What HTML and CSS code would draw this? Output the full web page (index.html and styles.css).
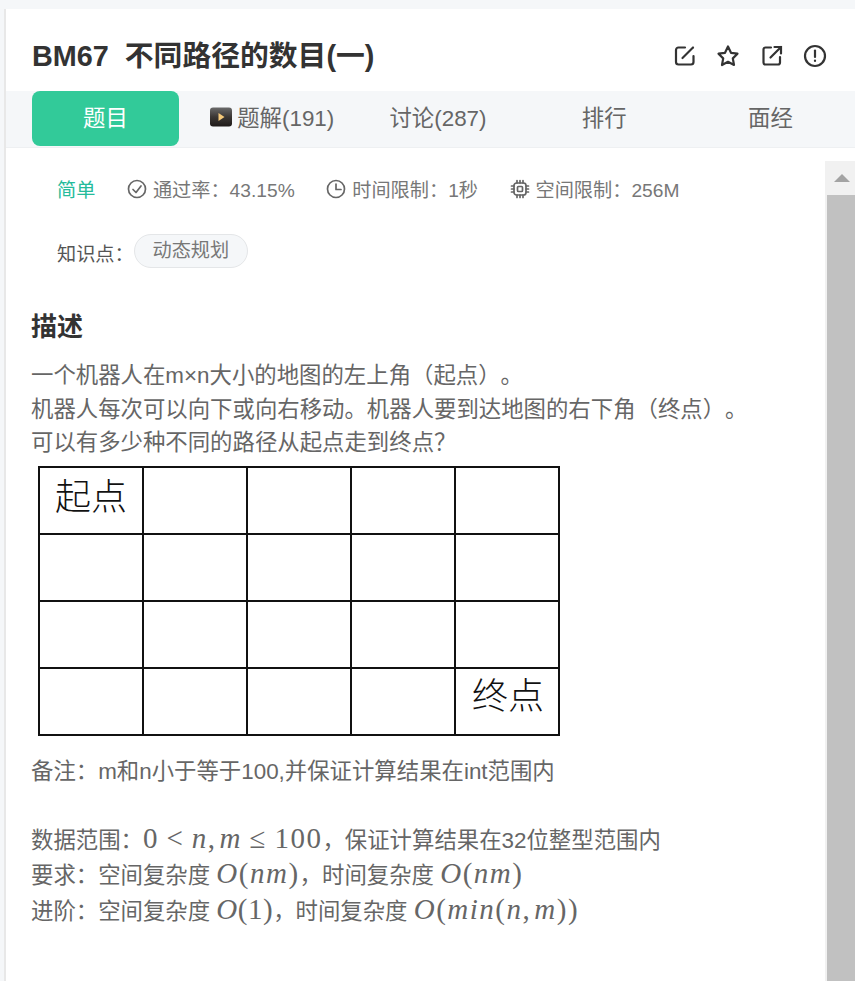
FILE: index.html
```html
<!DOCTYPE html>
<html>
<head>
  <meta charset="utf-8">
  <link rel="stylesheet" href="styles.css">
</head>
<body>
  <div class="panel">
    <div class="title-row">
      <h1 class="title">BM67&nbsp; 不同路径的数目(一)</h1>
      <div class="actions">
        <svg class="action-icon" viewBox="0 0 24 24"><path d="M12 3.500H5.500A2.500 2.500 0 0 0 3 6V18A2.500 2.500 0 0 0 5.500 20.500H18A2.500 2.500 0 0 0 20.500 18V12"/><path d="M9.500 14L20 3.500"/></svg>
        <svg class="action-icon" viewBox="0 0 24 24"><path d="M12 2.500L15 8.800L21.500 9.700L16.800 14.400L18 21L12 17.800L6 21L7.200 14.400L2.500 9.700L9 8.800Z" stroke-linejoin="round"/></svg>
        <svg class="action-icon" viewBox="0 0 24 24"><path d="M11 3.500H5.500A2 2 0 0 0 3.500 5.500V18.500A2 2 0 0 0 5.500 20.500H18A2 2 0 0 0 20 18.500V13"/><path d="M10.500 13.500L21 3M14.500 3H21V9.500"/></svg>
        <svg class="action-icon" viewBox="0 0 24 24"><circle cx="12" cy="12" r="10"/><path d="M12 6.500V13"/><path d="M12 16.500V17"/></svg>
      </div>
    </div>

    <div class="tabs">
      <div class="tab active">题目</div>
      <div class="tab">
        <svg class="video-icon" viewBox="0 0 24 24">
          <defs>
            <linearGradient id="videoBg" x1="0" y1="0" x2="0" y2="1"><stop offset="0" stop-color="#6a6a6a"/><stop offset="0.5" stop-color="#3a3634"/><stop offset="1" stop-color="#1e1a18"/></linearGradient>
          </defs>
          <rect x="1" y="2.500" width="22" height="19" rx="3" fill="url(#videoBg)"/>
          <path d="M9.500 8L15.500 12L9.500 16Z" fill="#f5c97a"/>
        </svg>题解(191)
      </div>
      <div class="tab">讨论(287)</div>
      <div class="tab">排行</div>
      <div class="tab">面经</div>
    </div>

    <div class="body-wrap">
      <div class="question">
        <div class="meta-row">
          <span class="level">简单</span>
          <span class="meta-item">
            <svg class="meta-icon" viewBox="0 0 20 20"><circle cx="10" cy="10" r="8.500"/><path d="M6 10.500L9 13.500L14 7"/></svg>通过率：43.15%
          </span>
          <span class="meta-item">
            <svg class="meta-icon" viewBox="0 0 20 20"><circle cx="10" cy="10" r="8.500"/><path d="M10 5V10.500H15"/></svg>时间限制：1秒
          </span>
          <span class="meta-item">
            <svg class="meta-icon" viewBox="0 0 20 20"><rect x="4" y="4" width="12" height="12" rx="2.500"/><rect x="7.500" y="7.500" width="5" height="5" rx="1"/><path d="M7 1.500V4M10 1.500V4M13 1.500V4M7 16V18.500M10 16V18.500M13 16V18.500M1.500 7H4M1.500 10H4M1.500 13H4M16 7H18.500M16 10H18.500M16 13H18.500"/></svg>空间限制：256M
          </span>
        </div>

        <div class="tag-row">
          <span class="tag-label">知识点：</span>
          <span class="tag">动态规划</span>
        </div>

        <h2 class="section-title">描述</h2>
        <div class="desc">
          <p>一个机器人在m×n大小的地图的左上角（起点）。</p>
          <p>机器人每次可以向下或向右移动。机器人要到达地图的右下角（终点）。</p>
          <p>可以有多少种不同的路径从起点走到终点？</p>
        </div>

        <table class="grid-map">
          <tr><td class="start">起点</td><td></td><td></td><td></td><td></td></tr>
          <tr><td></td><td></td><td></td><td></td><td></td></tr>
          <tr><td></td><td></td><td></td><td></td><td></td></tr>
          <tr><td></td><td></td><td></td><td></td><td class="end">终点</td></tr>
        </table>

        <div class="desc notes">
          <p>备注：m和n小于等于100,并保证计算结果在int范围内</p>
          <p class="blank"></p>
          <p>数据范围：<span class="math">0<span class="rel">&lt;</span><i>n</i>,<i class="after-comma">m</i><span class="rel">≤</span>100</span>，保证计算结果在32位整型范围内</p>
          <p>要求：空间复杂度 <span class="math"><i>O</i>(<i>nm</i>)</span>，时间复杂度 <span class="math"><i>O</i>(<i>nm</i>)</span></p>
          <p>进阶：空间复杂度 <span class="math tight"><i>O</i>(1)</span>，时间复杂度 <span class="math"><i>O</i>(<i>min</i>(<i>n</i>,<i class="after-comma">m</i>))</span></p>
        </div>
      </div>

      <div class="scrollbar">
        <div class="scroll-btn"><span class="scroll-arrow"></span></div>
        <div class="scroll-thumb"></div>
      </div>
    </div>
  </div>
</body>
</html>
```

FILE: styles.css
```css
* {
  margin: 0;
  padding: 0;
  box-sizing: border-box;
}

html, body {
  height: 981px;
  overflow: hidden;
}

body {
  background: #f5f7f9;
  padding-top: 9px;
  font-family: "Liberation Sans", "Noto Sans CJK SC", sans-serif;
  color: #666;
  text-spacing-trim: space-all;
}

.panel {
  height: 972px;
  margin-left: 4px;
  border-left: 2px solid #e8e8e8;
  background: #fff;
  display: flex;
  flex-direction: column;
}

.title-row {
  height: 82px;
  padding: 7px 28px 0 26px;
  display: flex;
  align-items: center;
  justify-content: space-between;
}

.title {
  font-size: 28.800px;
  font-weight: 700;
  color: #333;
}

.actions {
  display: flex;
  gap: 19.500px;
  margin-top: 4px;
}

.action-icon {
  width: 24px;
  height: 24px;
  fill: none;
  stroke: #333;
  stroke-width: 2.200;
  stroke-linecap: round;
}

.tabs {
  height: 57px;
  padding: 0 0 6px 26px;
  background: #f5f7f9;
  border-bottom: 1px solid #eef0f2;
  display: flex;
  gap: 19.250px;
}

.tab {
  width: 147px;
  display: flex;
  align-items: center;
  justify-content: center;
  font-size: 22.400px;
  color: #666;
}

.tab.active {
  margin-bottom: -5px;
  padding-bottom: 5px;
  background: #32ca99;
  border-radius: 8px;
  color: #fff;
}

.video-icon {
  width: 24px;
  height: 24px;
  margin: 2px 4px 0 0;
}

.body-wrap {
  flex: 1;
  display: flex;
  overflow: hidden;
}

.question {
  flex: 1;
  padding: 0 0 0 25px;
}

.meta-row {
  height: 42px;
  margin-top: 23px;
  padding-left: 26px;
  display: flex;
  align-items: flex-start;
  gap: 31.500px;
  font-size: 19.200px;
  line-height: 40px;
  color: #777;
}

.level {
  color: #25bb9b;
}

.meta-item {
  display: flex;
  align-items: center;
}

.meta-icon {
  width: 20px;
  height: 20px;
  margin-right: 6px;
  margin-top: -4px;
  fill: none;
  stroke: #666;
  stroke-width: 1.700;
  stroke-linecap: round;
  stroke-linejoin: round;
}

.tag-row {
  margin-top: 21px;
  padding-left: 26px;
  display: flex;
  align-items: flex-start;
  font-size: 19.200px;
}

.tag-label {
  margin-top: 4px;
  color: #555;
  line-height: 34px;
  width: 77px;
}

.tag {
  height: 34px;
  padding: 0 17.500px;
  border: 1px solid #e4e6e8;
  border-radius: 17px;
  background: #f5f7f9;
  line-height: 32px;
  color: #777;
}

.section-title {
  margin-top: 37px;
  font-size: 26px;
  line-height: 36px;
  font-weight: 700;
  color: #333;
}

.desc {
  margin-top: 14px;
  font-size: 22.400px;
  line-height: 33.500px;
  color: #666;
}

.blank {
  height: 33.500px;
}

.grid-map {
  margin: 6px 0 0 7px;
  border-collapse: collapse;
  width: 522px;
  table-layout: fixed;
  background: #fff;
}

.grid-map td {
  height: 67px;
  border: 2px solid #111;
  font-size: 36px;
  font-weight: 300;
  color: #111;
  vertical-align: top;
  line-height: 54px;
}

.grid-map .start {
  padding: 3px 0 0 15px;
}

.grid-map .end {
  padding: 0 0 10px 16px;
  vertical-align: bottom;
}

.notes {
  margin-top: 19px;
}

.math {
  font-family: "Liberation Serif", serif;
  font-size: 29px;
  letter-spacing: 1.500px;
  color: #666;
}

.math.tight {
  letter-spacing: 0.500px;
}

.rel {
  margin: 0 7.500px;
}

.after-comma {
  margin-left: 3px;
}

.scrollbar {
  width: 30px;
  margin-top: 13px;
  display: flex;
  flex-direction: column;
  background: #f1f1f1;
}

.scroll-btn {
  height: 34px;
  padding-left: 3px;
  display: flex;
  align-items: center;
  justify-content: center;
}

.scroll-arrow {
  width: 0;
  height: 0;
  border-left: 8px solid transparent;
  border-right: 8px solid transparent;
  border-bottom: 8px solid #a3a3a3;
}

.scroll-thumb {
  flex: 1;
  margin: 0 0 0 2px;
  background: #c1c1c1;
}
```
